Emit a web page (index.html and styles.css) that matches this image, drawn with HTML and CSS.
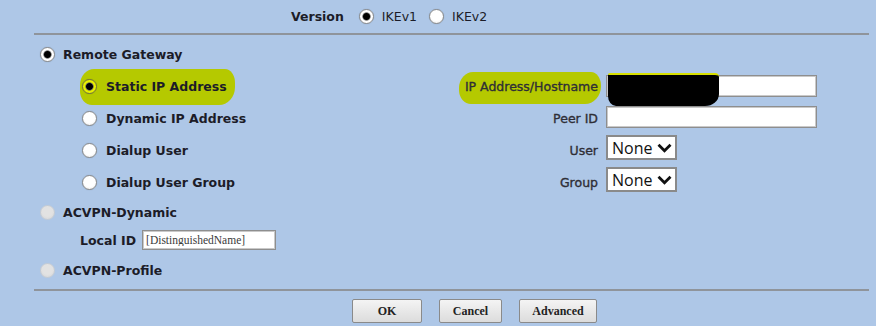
FILE: index.html
```html
<!DOCTYPE html>
<html lang="en">
<head>
  <meta charset="UTF-8" />
  <title>Remote Gateway</title>
  <link rel="stylesheet" href="styles.css">
</head>
<body>
  <div class="version">
    <span class="label-b">Version</span>
    <label class="opt-inline"><input type="radio" class="radio" name="ver" checked> IKEv1</label>
    <label class="opt-inline"><input type="radio" class="radio" name="ver"> IKEv2</label>
  </div>

  <div class="panel">
    <div class="row">
      <input type="radio" class="radio" name="mode" checked>
      <span class="label-b">Remote Gateway</span>
    </div>

    <div class="sub-grid">
      <div class="cell">
        <span class="hl hl-static"></span>
        <input type="radio" class="radio radio-hl" name="gw" checked>
        <span class="label-b">Static IP Address</span>
      </div>
      <div class="cell right">
        <span class="hl hl-ip"></span>
        <span class="label-r">IP Address/Hostname</span>
      </div>
      <div class="cell ctrl">
        <input type="text" class="field field-wide">
        <span class="redact"></span>
      </div>

      <div class="cell">
        <input type="radio" class="radio" name="gw">
        <span class="label-b">Dynamic IP Address</span>
      </div>
      <div class="cell right"><span class="label-r">Peer ID</span></div>
      <div class="cell ctrl"><input type="text" class="field field-wide field-peer"></div>

      <div class="cell">
        <input type="radio" class="radio" name="gw">
        <span class="label-b">Dialup User</span>
      </div>
      <div class="cell right"><span class="label-r">User</span></div>
      <div class="cell ctrl">
        <div class="select">
          <select><option>None</option></select>
          <svg class="chev" width="15" height="10" viewBox="0 0 15 10"><path d="M1.5 1.8 L7.5 7.8 L13.5 1.8" fill="none" stroke="#111" stroke-width="2.8"/></svg>
        </div>
      </div>

      <div class="cell">
        <input type="radio" class="radio" name="gw">
        <span class="label-b">Dialup User Group</span>
      </div>
      <div class="cell right"><span class="label-r">Group</span></div>
      <div class="cell ctrl">
        <div class="select">
          <select><option>None</option></select>
          <svg class="chev" width="15" height="10" viewBox="0 0 15 10"><path d="M1.5 1.8 L7.5 7.8 L13.5 1.8" fill="none" stroke="#111" stroke-width="2.8"/></svg>
        </div>
      </div>
    </div>

    <div class="row row-acvpn">
      <input type="radio" class="radio" name="mode" disabled>
      <span class="label-b">ACVPN-Dynamic</span>
    </div>
    <div class="row row-local">
      <span class="label-b">Local ID</span>
      <input type="text" class="field field-local" value="[DistinguishedName]">
    </div>
    <div class="row row-profile">
      <input type="radio" class="radio" name="mode" disabled>
      <span class="label-b">ACVPN-Profile</span>
    </div>
  </div>

  <div class="buttons">
    <button class="btn btn-ok">OK</button>
    <button class="btn btn-cancel">Cancel</button>
    <button class="btn btn-adv">Advanced</button>
  </div>
</body>
</html>
```

FILE: styles.css
```css
body {
  margin: 0;
  width: 876px;
  height: 326px;
  overflow: hidden;
  background-color: #aec7e7;
  font-family: "DejaVu Sans", Verdana, sans-serif;
  font-size: 12.5px;
  color: #1c1c28;
}
.label-b {
  font-weight: bold;
  white-space: nowrap;
}
.label-r {
  color: #2e2e36;
  white-space: nowrap;
  -webkit-text-stroke: 0.35px #2e2e36;
}

/* radios */
.radio {
  appearance: none;
  -webkit-appearance: none;
  width: 15px;
  height: 15px;
  margin: 0;
  border-radius: 50%;
  border: 1px solid #8a8a8a;
  background: radial-gradient(circle at 50% 40%, #fff 55%, #e4e4e4);
  box-shadow: 0 0 1px rgba(0,0,0,0.25);
  flex: none;
}
.radio:checked {
  background: radial-gradient(circle, #000 0 3px, #555 3.6px, #fff 4.6px);
}
.radio-hl:checked {
  background: radial-gradient(circle, #000 0 3px, #555 3.6px, #e8f000 4.6px);
  border-color: #707040;
}
.radio:disabled {
  border-color: #c6ccd4;
  background: radial-gradient(circle at 50% 40%, #e2e2e2 50%, #d2d4d8);
  box-shadow: none;
}

/* top version row */
.version {
  height: 33px;
  display: flex;
  align-items: center;
  padding-left: 291px;
}
.version .label-b {
  margin-right: 15px;
}
.opt-inline {
  display: flex;
  align-items: center;
  gap: 8px;
  margin-right: 12px;
}

/* main panel */
.panel {
  margin-left: 34px;
  width: 835px;
  border-top: 2px solid #8f949b;
  border-bottom: 2px solid #8f949b;
  padding: 3px 0 2px 6px;
  box-sizing: border-box;
}
.row {
  height: 32px;
  display: flex;
  align-items: center;
  gap: 8px;
}
.row-acvpn { height: 28px; }
.row-local {
  height: 28px;
  padding-left: 40px;
  gap: 6px;
}
.row-profile { height: 33px; }

.sub-grid {
  display: grid;
  grid-template-columns: 372px 136px 220px;
  grid-auto-rows: 32px;
  column-gap: 8px;
  margin-left: 42px;
}
.cell {
  position: relative;
  display: flex;
  align-items: center;
  gap: 9px;
}
.cell > * {
  position: relative;
  z-index: 1;
}
.cell.right {
  justify-content: flex-end;
}

/* highlighter marks */
.cell > .hl {
  position: absolute;
  z-index: 0;
  background: #b5c900;
  border-radius: 14px 10px 16px 12px / 16px 14px 18px 14px;
}
.hl-static {
  left: -2px;
  top: -1px;
  width: 155px;
  height: 36px;
}
.hl-ip {
  left: -3px;
  top: 2px;
  width: 142px;
  height: 32px;
}
.cell > .redact {
  position: absolute;
  z-index: 2;
  left: 2px;
  top: 3px;
  width: 111px;
  height: 31px;
  background: #000;
  border-top: 2px solid #d8e000;
  border-radius: 2px 4px 14px 8px / 2px 4px 12px 10px;
}

/* fields */
.field {
  box-sizing: border-box;
  border: 1px solid #8e8e8e;
  box-shadow: inset 0 0 0 1px #c9c9c9;
  background: #fff;
  padding: 0 3px;
  margin: 0;
}
.field-wide {
  width: 211px;
  height: 22px;
}
.field-peer {
  margin-top: -3px;
}
.field-local {
  width: 134px;
  height: 20px;
  font-family: "Liberation Serif", "Times New Roman", serif;
  font-size: 11.5px;
  color: #3a3a3a;
}

/* selects */
.select {
  position: relative;
  width: 71px;
  height: 25px;
  margin-top: -5px;
}
.select select {
  appearance: none;
  -webkit-appearance: none;
  width: 100%;
  height: 100%;
  box-sizing: border-box;
  border: 2px solid #8a8a8a;
  background: #fff;
  padding: 0 0 0 4px;
  font-family: "Open Sans", "Liberation Sans", sans-serif;
  font-size: 16px;
  color: #111;
}
.select .chev {
  position: absolute;
  right: 5px;
  top: 8px;
  pointer-events: none;
}

/* buttons */
.buttons {
  display: flex;
  gap: 17px;
  padding: 8px 0 0 352px;
}
.btn {
  height: 24px;
  border: 1px solid #8a8a8a;
  border-radius: 2px;
  background: linear-gradient(#f4f4f4, #dcdcdc);
  font-family: "Liberation Serif", "Times New Roman", serif;
  font-size: 12px;
  font-weight: bold;
  color: #222;
  padding: 0;
}
.btn-ok { width: 70px; }
.btn-cancel { width: 63px; }
.btn-adv { width: 78px; }
```
